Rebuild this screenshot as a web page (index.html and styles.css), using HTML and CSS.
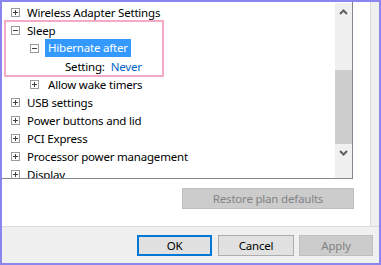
FILE: index.html
```html
<!DOCTYPE html>
<html>
  <head>
    <meta charset="UTF-8">
    <title>Advanced settings</title>
    <link rel="stylesheet" href="styles.css">
  </head>
  <body>
    <div class="window">
      <div class="main">
        <div class="tab">
          <div class="tree">
            <div class="list">
              <div class="row lvl0"><svg class="exp" width="9" height="9"><rect x="0.5" y="0.5" width="8" height="8"/><path d="M2 4.5h5M4.5 2v5"/></svg><span>Wireless Adapter Settings</span></div>
              <div class="row lvl0"><svg class="exp" width="9" height="9"><rect x="0.5" y="0.5" width="8" height="8"/><path d="M2 4.5h5"/></svg><span>Sleep</span></div>
              <div class="row lvl1"><svg class="exp" width="9" height="9"><rect x="0.5" y="0.5" width="8" height="8"/><path d="M2 4.5h5"/></svg><span class="sel">Hibernate after</span></div>
              <div class="row lvl2"><span>Setting:</span><span class="value">Never</span></div>
              <div class="row lvl1"><svg class="exp" width="9" height="9"><rect x="0.5" y="0.5" width="8" height="8"/><path d="M2 4.5h5M4.5 2v5"/></svg><span>Allow wake timers</span></div>
              <div class="row lvl0"><svg class="exp" width="9" height="9"><rect x="0.5" y="0.5" width="8" height="8"/><path d="M2 4.5h5M4.5 2v5"/></svg><span>USB settings</span></div>
              <div class="row lvl0"><svg class="exp" width="9" height="9"><rect x="0.5" y="0.5" width="8" height="8"/><path d="M2 4.5h5M4.5 2v5"/></svg><span>Power buttons and lid</span></div>
              <div class="row lvl0"><svg class="exp" width="9" height="9"><rect x="0.5" y="0.5" width="8" height="8"/><path d="M2 4.5h5M4.5 2v5"/></svg><span>PCI Express</span></div>
              <div class="row lvl0"><svg class="exp" width="9" height="9"><rect x="0.5" y="0.5" width="8" height="8"/><path d="M2 4.5h5M4.5 2v5"/></svg><span>Processor power management</span></div>
              <div class="row lvl0"><svg class="exp" width="9" height="9"><rect x="0.5" y="0.5" width="8" height="8"/><path d="M2 4.5h5M4.5 2v5"/></svg><span>Display</span></div>

              <!-- annotation frame around the sleep group -->
              <div class="mark"></div>
            </div>

            <div class="scroll">
              <div class="arrow"><svg width="9" height="6"><path d="M1 5l3.5-3.5L8 5"/></svg></div>
              <div class="thumb"></div>
              <div class="arrow"><svg width="9" height="6"><path d="M1 1l3.5 3.5L8 1"/></svg></div>
            </div>
          </div>

          <div class="restore-row">
            <div class="btn off restore">Restore plan defaults</div>
          </div>
        </div>
        <div class="strip"></div>
      </div>

      <div class="footer">
        <div class="btn default ok">OK</div>
        <div class="btn cancel">Cancel</div>
        <div class="btn off apply">Apply</div>
      </div>
    </div>
  </body>
</html>
```

FILE: styles.css
```css
body {
  margin: 0;
  font-family: "Noto Sans", sans-serif;
  font-size: 11.5px;
  letter-spacing: -0.2px;
  color: black;
  background: white;
}

.window {
  width: 381px;
  height: 265px;
  box-sizing: border-box;
  border: 2px solid #8a86ee;
  display: flex;
  flex-direction: column;
}

.main {
  display: flex;
  height: 225px;
  box-sizing: border-box;
  border-bottom: 1px solid #dcdcdc;
}

.tab {
  flex: 1;
  background: white;
}

.strip {
  width: 8px;
  background: #f0f0f0;
  border-left: 1px solid #dadada;
}

.tree {
  display: flex;
  width: 351px;
  height: 177px;
  box-sizing: border-box;
  border-right: 1px solid #828790;
  border-bottom: 1px solid #828790;
}

.list {
  position: relative;
  flex: 1;
  overflow: hidden;
  padding-top: 1px;
}

.row {
  display: flex;
  align-items: center;
  height: 18px;
  white-space: nowrap;
}

.lvl0 { padding-left: 9px; }
.lvl1 { padding-left: 28px; }
.lvl2 { padding-left: 63px; }

.exp {
  flex: none;
  margin-right: 7px;
}

.exp rect {
  fill: white;
  stroke: #9a9a9a;
}

.exp path {
  stroke: #404040;
  stroke-width: 1;
}

.lvl1 .exp {
  margin-right: 6px;
}

.sel {
  background: #3399ff;
  color: white;
  padding: 0 3px 1px;
  line-height: 17px;
}

.lvl1 span:not(.sel) {
  padding-left: 3px;
}

.value {
  color: #0066cc;
  margin-left: 6px;
}

.mark {
  position: absolute;
  left: 2px;
  top: 18px;
  width: 156px;
  height: 53px;
  border: 2px solid #f5a9c8;
}

.scroll {
  width: 17px;
  margin-top: 1px;
  background: #f0f0f0;
  display: flex;
  flex-direction: column;
}

.arrow {
  height: 17px;
  display: flex;
  align-items: center;
  justify-content: center;
}

.arrow path {
  fill: none;
  stroke: #606060;
  stroke-width: 2;
}

.thumb {
  margin-top: 50px;
  height: 74px;
  background: #cdcdcd;
}

.restore-row {
  display: flex;
  justify-content: flex-end;
  padding-right: 16px;
  margin-top: 9px;
}

.btn {
  height: 21px;
  box-sizing: border-box;
  display: flex;
  align-items: center;
  justify-content: center;
  background: #e1e1e1;
  border: 1px solid #adadad;
}

.btn.off {
  background: #cccccc;
  border-color: #bfbfbf;
  color: #838383;
}

.restore {
  width: 172px;
}

.footer {
  flex: 1;
  background: #f0f0f0;
  display: flex;
  justify-content: flex-end;
  padding: 8px 6px 0 0;
}

.ok {
  width: 75px;
  border: 2px solid #0078d7;
}

.cancel {
  width: 76px;
  margin-left: 6px;
}

.apply {
  width: 74px;
  margin-left: 5px;
}
```
